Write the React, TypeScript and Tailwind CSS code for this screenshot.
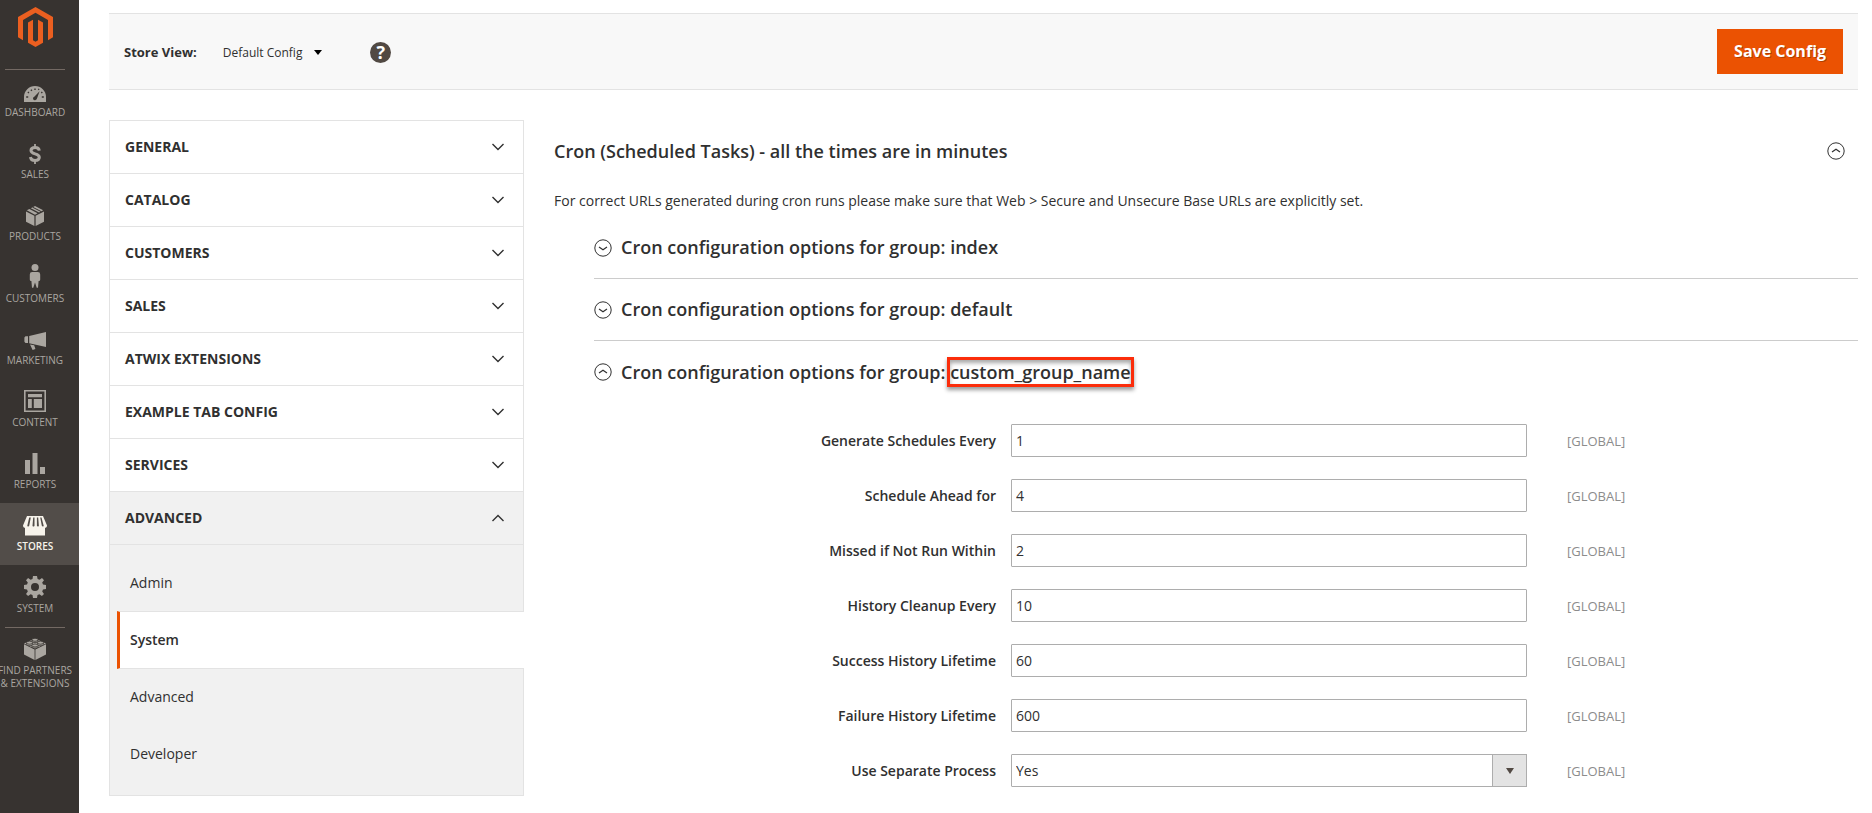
import React from "react";

type IconProps = { className?: string };

const MagentoLogo = () => (
    <svg width="35" height="40" viewBox="0 0 35 40" fill="#eb5f20" aria-hidden="true">
        <path d="M17.5 0 35 10v20.3l-5 2.9V12.9L17.5 5.8 5 12.9v20.3l-5-2.9V10z" />
        <path d="M10 15.6l5-2.9v20.5l2.5 1.5 2.5-1.5V12.7l5 2.9v20.2L17.5 40 10 35.8z" />
    </svg>
);

const DashboardIcon = () => (
    <svg width="22" height="16" viewBox="0 0 22 16" fill="currentColor">
        <path
            fillRule="evenodd"
            d="M0 16V11a11 11 0 0 1 22 0v5zM9 12.4a2 2 0 0 0 3.8.7L15.6 5.200l-5.3 5.600a2 2 0 0 0-1.300 1.600zM2.200 10.300v1.400h2v-1.400zM3.400 6.500l1 1 1-1-1-1zM6.400 4.200l1 1 1-1-1-1zM10.300 2.400v1.500h1.400V2.400zM13.800 3.300l.9.900.9-.9-.9-.9zM16.800 6.500l1 1 1-1-1-1zM17.800 10.300v1.400h2v-1.400z"
        />
    </svg>
);

const SalesIcon = () => (
    <svg width="12" height="20" viewBox="0 0 12 20" fill="none" stroke="currentColor">
        <path strokeWidth="1.8" d="M6 0v3M6 17v3" />
        <path
            strokeWidth="3"
            d="M10.300 6.600C10 4.600 8.600 3.500 6.100 3.500 3.500 3.500 2 4.600 2 6.500c0 4.400 8.300 2.300 8.300 6.700 0 2.100-1.500 3.300-4.200 3.300-2.900 0-4.400-1.200-4.600-3.500"
        />
    </svg>
);

const ProductsIcon = () => (
    <svg width="18" height="20" viewBox="0 0 18 20" fill="currentColor">
        <path d="M0 5.600l8.400 4.200V20L0 15.700zM18 5.600l-8.400 4.200V20l8.400-4.300z" />
        <path d="M.8 4.300 3.400 3l8.200 4.300L9 8.700zM4.800 2.300 9 .1l8.200 4.200-4.200 2.200z" />
        <path stroke="#373330" strokeWidth="1" d="M6.600 1.200 15 5.500" />
    </svg>
);

const CustomersIcon = () => (
    <svg width="12" height="24" viewBox="0 0 12 24" fill="currentColor">
        <circle cx="6" cy="3.500" r="3.500" />
        <path d="M3.200 8h5.600A2.400 2.400 0 0 1 11.200 10.400V15.500c0 1-.8 1.500-1.600 1.500L9 23.800H7.700L6 18.500l-1.700 5.300H3L2.400 17C1.600 17 .8 16.500.8 15.500v-5.100A2.400 2.400 0 0 1 3.200 8z" />
    </svg>
);

const MarketingIcon = () => (
    <svg width="22" height="18" viewBox="0 0 22 18" fill="currentColor">
        <path d="M22 0v15L5.200 11.200V4zM4 4.300v6.600H1.500L.4 9.700V5.500l1.100-1.200zM6 12.400l4.200.9 1.200 3.700-2.800.9z" />
    </svg>
);

const ContentIcon = () => (
    <svg width="22" height="22" viewBox="0 0 22 22" fill="currentColor">
        <path fillRule="evenodd" d="M0 0h22v22H0zM1.600 1.600v18.800h18.800V1.600z" />
        <path d="M4 4h14v3.200H4zM4 9h3.800v9H4zM9.800 9H18v9H9.800z" />
    </svg>
);

const ReportsIcon = () => (
    <svg width="20" height="21" viewBox="0 0 20 21" fill="currentColor">
        <path d="M0 7h5v14H0zM7.500 0h5v21h-5zM15 14h5v7h-5z" />
    </svg>
);

const StoresIcon = () => (
    <svg width="24" height="20" viewBox="0 0 24 20" fill="currentColor">
        <path d="M4 0h16l4 9.500c0 1.700-1 2.300-2 2.300V19.500H2v-7.700c-1 0-2-.6-2-2.300z" />
        <path
            fill="#524d49"
            d="M6.200 1.500h1.600L6.200 9.800c-.2 1-2 .9-1.900 0zM10.200 1.500h1.300v8.300c0 1-2.100 1-2 0zM13.900 1.500h1.300l.7 8.300c0 1-1.900 1-2 0zM17.200 1.500h1.300l2.200 8.300c.1.900-1.600 1-1.900 0z"
        />
    </svg>
);

const SystemIcon = () => (
    <svg width="22" height="22" viewBox="0 0 22 22" fill="currentColor">
        <path
            fillRule="evenodd"
            d="M9 0h4l.6 3 1.900.8L18 2.100 20 4.200 18.200 6.600l.8 1.900 3 .5v4l-3 .5-.8 1.900L20 17.900 17.900 20l-2.500-1.700-1.900.8L13 22H9l-.5-2.900-1.900-.8L4.100 20 2 17.900l1.800-2.500L3 13.500 0 13V9l3-.5.8-1.900L2 4.200 4.100 2.100l2.500 1.700L8.500 3zM11 7a4 4 0 1 0 0 8 4 4 0 0 0 0-8z"
        />
    </svg>
);

const PartnersIcon = () => (
    <svg width="22" height="22" viewBox="0 0 22 22" fill="currentColor">
        <path d="M0 6.300l10.600 5.200V22L0 16.500zM22 6.300l-10.600 5.200V22L22 16.500z" />
        <path d="M11 .5l11 5-11 5.300L0 5.500z" />
        <g stroke="#373330" strokeWidth=".8">
            <path d="M8 1.700v1.500c0 1.900 6 1.900 6 0V1.700M2.500 4.700v1.500c0 1.900 6 1.900 6 0V4.700M13.500 4.700v1.500c0 1.900 6 1.900 6 0V4.700M8 7.300v1.500c0 1.900 6 1.900 6 0V7.300" />
            <ellipse cx="11" cy="1.800" rx="3" ry="1.500" />
            <ellipse cx="5.500" cy="4.700" rx="3" ry="1.500" />
            <ellipse cx="16.500" cy="4.700" rx="3" ry="1.500" />
            <ellipse cx="11" cy="7.500" rx="3" ry="1.500" />
        </g>
    </svg>
);

const Chevron = ({ className }: IconProps) => (
    <svg className={className} width="12" height="8" viewBox="0 0 12 8" fill="none" stroke="#303030" strokeWidth="1.400">
        <path d="M.5 1 6 6.500 11.500 1" />
    </svg>
);

const CircleChevron = ({ className }: IconProps) => (
    <svg className={className} width="18" height="18" viewBox="0 0 18 18" fill="none" stroke="#303030">
        <circle cx="9" cy="9" r="8.200" strokeWidth="1" />
        <path strokeWidth="1.200" d="M5 8l4 2.800L13 8" />
    </svg>
);

const menu = [
    { label: "Dashboard", icon: <DashboardIcon /> },
    { label: "Sales", icon: <SalesIcon /> },
    { label: "Products", icon: <ProductsIcon /> },
    { label: "Customers", icon: <CustomersIcon /> },
    { label: "Marketing", icon: <MarketingIcon /> },
    { label: "Content", icon: <ContentIcon /> },
    { label: "Reports", icon: <ReportsIcon /> },
    { label: "Stores", icon: <StoresIcon />, active: true },
    { label: "System", icon: <SystemIcon /> },
];

const tabs = ["General", "Catalog", "Customers", "Sales", "Atwix Extensions", "Example Tab Config", "Services"];

const sections = ["Admin", "System", "Advanced", "Developer"];

const fields = [
    { id: "schedule_generate_every", label: "Generate Schedules Every", value: "1" },
    { id: "schedule_ahead_for", label: "Schedule Ahead for", value: "4" },
    { id: "schedule_lifetime", label: "Missed if Not Run Within", value: "2" },
    { id: "history_cleanup_every", label: "History Cleanup Every", value: "10" },
    { id: "history_success_lifetime", label: "Success History Lifetime", value: "60" },
    { id: "history_failure_lifetime", label: "Failure History Lifetime", value: "600" },
];

const Sidebar = () => (
    <aside className="w-[79px] shrink-0 overflow-hidden bg-[#373330] text-[#aaa6a0]">
        {/* The menu is wider than the bar and is cut on the left */}
        <div className="-ml-[9px] w-[88px]">
            <a href="#" aria-label="Magento" className="flex h-[69px] justify-center pt-[7px]">
                <MagentoLogo />
            </a>
            <nav className="text-[10px] leading-[13px] uppercase">
                <div className="mx-[14px] -mb-px h-px bg-[#736963]" />
                {menu.map((item) => (
                    <a
                        key={item.label}
                        href="#"
                        className={
                            item.active
                                ? "flex h-[62px] flex-col items-center gap-1 bg-[#524d49] pt-[9px] font-semibold text-[#f7f3eb]"
                                : "flex h-[62px] flex-col items-center gap-1 pt-[9px]"
                        }
                    >
                        <span className="flex h-6 items-end">{item.icon}</span>
                        <span>{item.label}</span>
                    </a>
                ))}
                <div className="mx-[14px] -mb-px h-px bg-[#736963]" />
                <a href="#" className="flex flex-col items-center gap-1 pt-[9px] text-center">
                    <span className="flex h-6 items-end">
                        <PartnersIcon />
                    </span>
                    <span className="whitespace-nowrap">
                        Find Partners
                        <br />& Extensions
                    </span>
                </a>
            </nav>
        </div>
    </aside>
);

const Toolbar = () => (
    <header className="flex h-[77px] items-center justify-between border-y border-[#e3e3e3] bg-[#f8f8f8] px-[15px]">
        <div className="flex items-center pt-[2px]">
            <span className="text-[13px] font-bold">Store View:</span>
            <button type="button" className="ml-[26px] flex items-center gap-3 text-[12px]">
                Default Config
                <svg width="8" height="5" viewBox="0 0 8 5" fill="#000">
                    <path d="M0 0h8L4 5z" />
                </svg>
            </button>
            <a
                href="#"
                aria-label="Help"
                className="ml-[48px] flex size-[21px] items-center justify-center rounded-full bg-[#514943] text-[18px] leading-[21px] font-bold text-white"
            >
                ?
            </a>
        </div>
        <button
            type="button"
            className="h-[45px] bg-[#eb5202] px-[17px] pb-[2px] text-[16px] font-bold text-white [text-shadow:1px_1px_0_rgba(0,0,0,0.25)]"
        >
            Save Config
        </button>
    </header>
);

const tabStyle = "flex h-[53px] w-full items-center justify-between border-b border-[#e3e3e3] pr-[19px] pl-[15px] font-bold uppercase";

const ConfigNav = () => (
    <nav className="w-[415px] shrink-0 border border-[#e3e3e3] text-[14px]">
        {tabs.map((tab) => (
            <button key={tab} type="button" className={tabStyle}>
                <span className="pb-[2px]">{tab}</span>
                <Chevron />
            </button>
        ))}
        <button type="button" className={`${tabStyle} bg-[#f1f1f1]`}>
            <span className="pb-[2px]">Advanced</span>
            <Chevron className="rotate-180" />
        </button>
        <div className="bg-[#f1f1f1] pt-[9px] pb-[13px] pl-[7px]">
            {sections.map((section) =>
                section === "System" ? (
                    <a
                        key={section}
                        href="#"
                        className="-mr-px -mb-px flex h-[58px] items-center border-y border-l-[3px] border-y-[#e3e3e3] border-l-[#eb5202] bg-white pb-px pl-[10px] font-semibold"
                    >
                        {section}
                    </a>
                ) : (
                    <a key={section} href="#" className="flex h-[57px] items-center pl-[13px]">
                        {section}
                    </a>
                )
            )}
        </div>
    </nav>
);

const fieldRow = "grid grid-cols-[417fr_516fr_331fr] items-center";
const inputStyle = "h-[33px] w-full rounded-[1px] border border-[#adadad] bg-white px-1 text-[14px] text-[#303030]";
const scopeStyle = "pt-[2px] pl-10 text-[13px] text-[#8c8c8c]";

const CronSettings = () => (
    <main className="min-w-0 flex-1">
        <div className="flex h-[62px] items-center justify-between pr-[13px]">
            <h2 className="text-[18px] font-semibold">Cron (Scheduled Tasks) - all the times are in minutes</h2>
            <button type="button" aria-label="Collapse">
                <CircleChevron className="rotate-180" />
            </button>
        </div>
        <p className="mt-[9px] text-[14px] leading-[20px]">
            For correct URLs generated during cron runs please make sure that Web &gt; Secure and Unsecure Base URLs are
            explicitly set.
        </p>
        <div className="mt-[6px] ml-10">
            {["index", "default"].map((group) => (
                <button
                    key={group}
                    type="button"
                    className="flex h-[62px] w-full items-center gap-[9px] border-b border-[#cccccc] text-[18px] font-semibold"
                >
                    <CircleChevron />
                    <span>Cron configuration options for group: {group}</span>
                </button>
            ))}
            <button type="button" className="flex h-[62px] w-full items-center gap-[9px] text-[18px] font-semibold">
                <CircleChevron className="rotate-180" />
                <span>
                    Cron configuration options for group:{" "}
                    <span className="-m-[3px] border-[3px] border-[#fb2d0b] shadow-[0_3px_4px_rgba(0,0,0,0.4),inset_0_3px_4px_rgba(0,0,0,0.35)]">
                        custom_group_name
                    </span>
                </span>
            </button>
            <form className="mt-[21px] flex flex-col gap-[22px] text-[14px]">
                {fields.map((field) => (
                    <div key={field.id} className={fieldRow}>
                        <label htmlFor={field.id} className="pr-[15px] text-right font-semibold">
                            {field.label}
                        </label>
                        <input id={field.id} type="text" defaultValue={field.value} className={inputStyle} />
                        <span className={scopeStyle}>[GLOBAL]</span>
                    </div>
                ))}
                <div className={fieldRow}>
                    <label htmlFor="use_separate_process" className="pr-[15px] text-right font-semibold">
                        Use Separate Process
                    </label>
                    <div className="relative">
                        <select id="use_separate_process" defaultValue="Yes" className={`${inputStyle} appearance-none`}>
                            <option>Yes</option>
                            <option>No</option>
                        </select>
                        <span className="pointer-events-none absolute inset-y-0 right-0 flex w-[35px] items-center justify-center border border-[#adadad] bg-[#e3e3e3]">
                            <svg width="8" height="6" viewBox="0 0 8 6" fill="#514943">
                                <path d="M0 0h8L4 6z" />
                            </svg>
                        </span>
                    </div>
                    <span className={scopeStyle}>[GLOBAL]</span>
                </div>
            </form>
        </div>
    </main>
);

export default function App() {
    return (
        <div className="flex min-h-screen bg-white font-['Open_Sans','Noto_Sans',sans-serif] text-[#303030]">
            <Sidebar />
            <div className="min-w-0 flex-1 pt-[13px] pr-[14px] pl-[30px]">
                <Toolbar />
                <div className="mt-[30px] flex items-start gap-[30px]">
                    <ConfigNav />
                    <CronSettings />
                </div>
            </div>
        </div>
    );
}
